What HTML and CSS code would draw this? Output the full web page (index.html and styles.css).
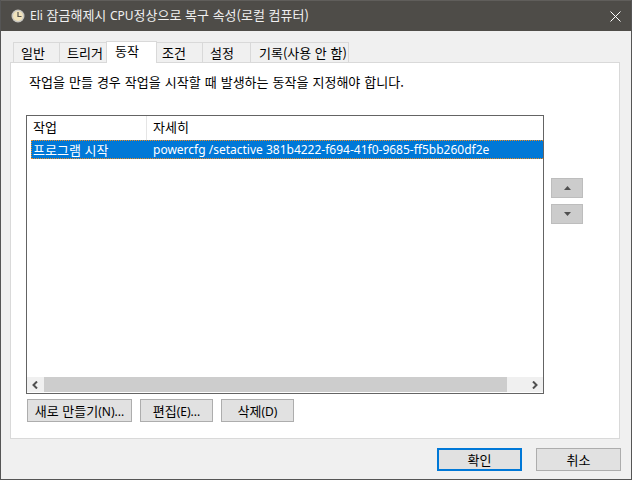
FILE: index.html
```html
<!DOCTYPE html>
<html lang="ko">
<head>
<meta charset="utf-8">
<title>속성</title>
<link rel="stylesheet" href="styles.css">
</head>
<body>
<div class="window">
  <header class="titlebar">
    <svg class="clock" width="14" height="14" viewBox="0 0 14 14"><circle cx="7" cy="7" r="6.5" fill="#c9c7c0"/><circle cx="7" cy="7" r="5" fill="#f1e3bb"/><path d="M7 3V7.5H10.5" fill="none" stroke="#55534f" stroke-width="1.2"/></svg>
    <span class="title"><span class="latin">Eli</span> 잠금해제시 <span class="latin">CPU</span>정상으로 복구 속성(로컬 컴퓨터)</span>
    <svg class="close" width="11" height="11" viewBox="0 0 11 11"><path d="M.5 .5L10.5 10.5M10.5 .5L.5 10.5" stroke="#fff" stroke-width="1" fill="none"/></svg>
  </header>
  <main class="content">
    <nav class="tabs">
      <span class="tab t1">일반</span>
      <span class="tab t2">트리거</span>
      <span class="tab active">동작</span>
      <span class="tab t4">조건</span>
      <span class="tab t5">설정</span>
      <span class="tab t6">기록(사용 안 함)</span>
    </nav>
    <section class="panel">
      <p class="desc">작업을 만들 경우 작업을 시작할 때 발생하는 동작을 지정해야 합니다.</p>
      <div class="listrow">
        <div class="list">
          <div class="head"><span class="c1">작업</span><span class="c2">자세히</span></div>
          <div class="row"><span class="c1">프로그램 시작</span><span class="c2">powercfg /setactive 381b4222-f694-41f0-9685-ff5bb260df2e</span></div>
          <div class="space"></div>
          <div class="hscroll">
            <span class="arrow"><svg width="7" height="8" viewBox="0 0 7 8"><path d="M5 .5L1.5 4L5 7.5" fill="none" stroke="#505050" stroke-width="2"/></svg></span>
            <span class="thumb"></span>
            <span class="track"></span>
            <span class="arrow"><svg width="7" height="8" viewBox="0 0 7 8"><path d="M2 .5L5.5 4L2 7.5" fill="none" stroke="#505050" stroke-width="2"/></svg></span>
          </div>
        </div>
        <div class="updown">
          <button class="mini"><svg width="7" height="4" viewBox="0 0 7 4"><path d="M3.5 0L7 4H0Z" fill="#505050"/></svg></button>
          <button class="mini"><svg width="7" height="4" viewBox="0 0 7 4"><path d="M0 0H7L3.5 4Z" fill="#505050"/></svg></button>
        </div>
      </div>
      <div class="actions">
        <button class="btn new">새로 만들기<span class="latin">(N)...</span></button>
        <button class="btn edit">편집<span class="latin">(E)...</span></button>
        <button class="btn edit">삭제<span class="latin">(D)</span></button>
      </div>
    </section>
    <footer class="footer">
      <button class="btn dlg ok">확인</button>
      <button class="btn dlg">취소</button>
    </footer>
  </main>
</div>
</body>
</html>
```

FILE: styles.css
```css
* { box-sizing: border-box; }
html, body { margin: 0; padding: 0; }
body {
  width: 632px;
  height: 480px;
  overflow: hidden;
  font-family: "Noto Sans CJK KR", "Noto Sans", sans-serif;
  font-size: 13px;
  color: #000;
}
.window {
  width: 632px;
  height: 480px;
  border: 1px solid #555;
  border-top: 0;
  display: flex;
  flex-direction: column;
  background: #f0f0f0;
}
.titlebar {
  height: 31px;
  flex: none;
  background: #4e4c48;
  border-top: 1px solid #605e5b;
  display: flex;
  align-items: center;
  padding: 0 10px 0 10px;
  color: #f0f0f0;
}
.clock { flex: none; margin-right: 5px; }
.title { flex: 1; line-height: 18px; padding-bottom: 2px; }
.latin { font-family: "Noto Sans", sans-serif; font-size: 12px; }
.close { flex: none; }
.content {
  flex: 1;
  display: flex;
  flex-direction: column;
  padding: 10px 10px 0 9px;
  min-height: 0;
}
.tabs {
  display: flex;
  height: 21px;
  align-items: flex-end;
  padding-left: 3px;
  position: relative;
  z-index: 1;
}
.tab {
  height: 20px;
  border: 1px solid #d9d9d9;
  border-bottom: 0;
  border-left-width: 0;
  background: #f0f0f0;
  display: flex;
  align-items: center;
  padding: 0 0 1px 7px;
  line-height: 1;
  white-space: nowrap;
}
.t1 { width: 47px; border-left-width: 1px; }
.t2 { width: 47px; }
.active {
  width: 51px;
  height: 22px;
  background: #fff;
  border-left-width: 1px;
  margin-left: -1px;
  margin-bottom: -1px;
  padding: 0 0 4px 8px;
}
.t4 { width: 46px; padding-left: 5px; }
.t5 { width: 48px; }
.t6 { width: 98px; padding-left: 8px; }
.panel {
  width: 610px;
  height: 377px;
  flex: none;
  background: #fff;
  border: 1px solid #d9d9d9;
  display: flex;
  flex-direction: column;
  padding: 0 0 0 15px;
}
.desc {
  margin: 10px 0 0 3px;
  height: 42px;
  line-height: 18px;
  white-space: nowrap;
  word-spacing: 0.4px;
}
.listrow { display: flex; align-items: flex-start; }
.list {
  width: 518px;
  height: 279px;
  border: 1px solid #646464;
  display: flex;
  flex-direction: column;
  background: #fff;
}
.head {
  height: 24px;
  flex: none;
  display: flex;
  align-items: center;
}
.head .c1 { width: 120px; padding: 0 0 3px 6px; height: 100%; border-right: 1px solid #e5e5e5; display: flex; align-items: center; }
.head .c2 { padding: 0 0 3px 6px; }
.row {
  height: 19px;
  flex: none;
  margin-left: 4px;
  background: #0078d7;
  color: #fff;
  display: flex;
  align-items: center;
  border: 1px dotted #f08a1d;
  border-right: 0;
  white-space: nowrap;
}
.row .c1 { width: 115px; padding-left: 1px; }
.row .c2 { padding-left: 6px; font-family: "Noto Sans", sans-serif; font-size: 12px; }
.space { flex: 1; }
.hscroll { height: 15px; flex: none; display: flex; background: #f0f0f0; margin-bottom: 1px; }
.arrow { width: 17px; display: flex; align-items: center; justify-content: center; flex: none; }
.thumb { flex: 1; background: #cdcdcd; }
.track { width: 19px; flex: none; }
.updown {
  display: flex;
  flex-direction: column;
  gap: 6px;
  margin: 63px 0 0 7px;
}
.mini {
  width: 32px;
  height: 20px;
  padding: 0;
  background: #cccccc;
  border: 1px solid #bdbdbd;
  display: flex;
  align-items: center;
  justify-content: center;
}
.actions { display: flex; gap: 8px; margin: 5px 0 0 1px; }
.btn {
  height: 23px;
  padding: 0;
  background: #e1e1e1;
  border: 1px solid #adadad;
  font: inherit;
  color: #000;
  line-height: 1;
  white-space: nowrap;
}
.new { width: 105px; }
.edit { width: 73px; }
.footer {
  display: flex;
  justify-content: flex-end;
  gap: 14px;
  margin-top: 9px;
}
.dlg { width: 85px; }
.ok { border: 2px solid #0078d7; }
```
